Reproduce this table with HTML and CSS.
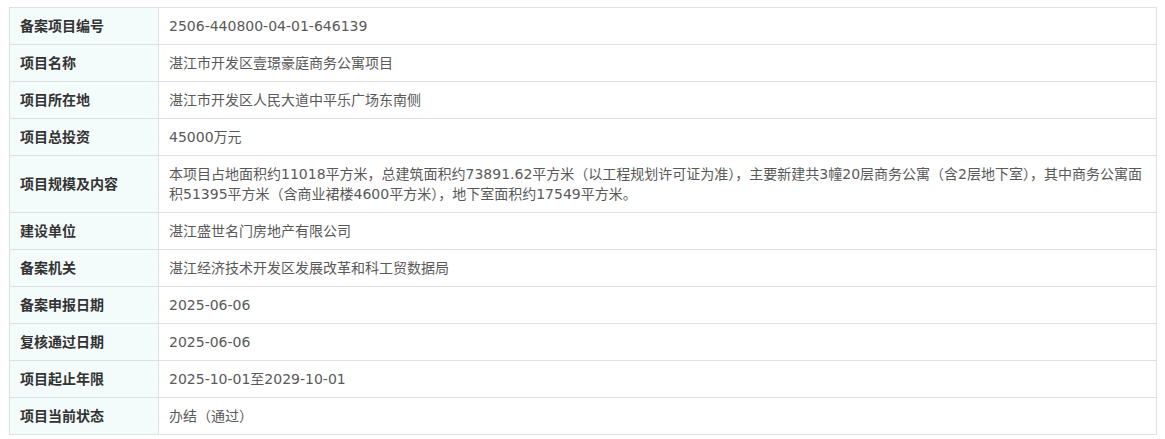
FILE: index.html
```html
<!doctype html>
<html lang="zh-CN">
  <head>
    <meta charset="utf-8">
    <title>项目备案信息</title>
    <link rel="stylesheet" href="styles.css">
  </head>
  <body>
    <table class="info-table">
      <tr><th>备案项目编号</th><td>2506-440800-04-01-646139</td></tr>
      <tr><th>项目名称</th><td>湛江市开发区壹璟豪庭商务公寓项目</td></tr>
      <tr><th>项目所在地</th><td>湛江市开发区人民大道中平乐广场东南侧</td></tr>
      <tr><th>项目总投资</th><td>45000万元</td></tr>
      <tr><th>项目规模及内容</th><td>本项目占地面积约11018平方米，总建筑面积约73891.62平方米（以工程规划许可证为准），主要新建共3幢20层商务公寓（含2层地下室），其中商务公寓面积51395平方米（含商业裙楼4600平方米），地下室面积约17549平方米。</td></tr>
      <tr><th>建设单位</th><td>湛江盛世名门房地产有限公司</td></tr>
      <tr><th>备案机关</th><td>湛江经济技术开发区发展改革和科工贸数据局</td></tr>
      <tr><th>备案申报日期</th><td>2025-06-06</td></tr>
      <tr><th>复核通过日期</th><td>2025-06-06</td></tr>
      <tr><th>项目起止年限</th><td>2025-10-01至2029-10-01</td></tr>
      <tr><th>项目当前状态</th><td>办结（通过）</td></tr>
    </table>
  </body>
</html>
```
FILE: styles.css
```css
body {
  margin: 7px 8px 0 9px;
  background: #fff;
  font-family: "DejaVu Sans", "Noto Sans CJK SC", sans-serif;
  font-size: 14px;
}

.info-table {
  width: 1148px;
  border-collapse: collapse;
}

.info-table th,
.info-table td {
  border: 1px solid #e0e0e0;
  padding: 8px 9px 8px 10px;
  line-height: 20px;
  text-align: left;
  vertical-align: middle;
}

.info-table th {
  width: 129px;
  background: #f3fbfb;
  color: #333;
  font-weight: bold;
}

.info-table td {
  color: #595959;
}
```
